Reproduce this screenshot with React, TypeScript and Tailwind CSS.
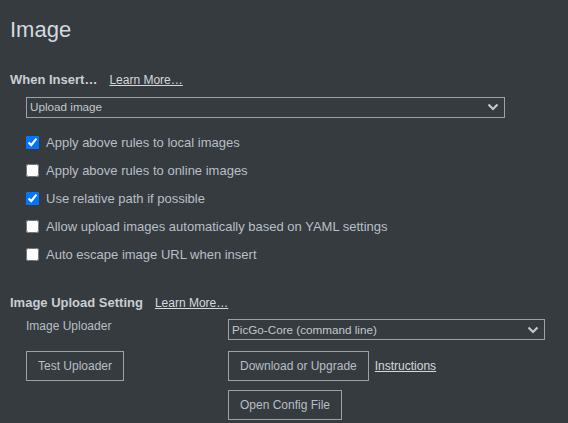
import React from "react";

const font = { fontFamily: '"Liberation Sans", Arial, sans-serif' };

const insertRules = [
  { label: "Apply above rules to local images", checked: true },
  { label: "Apply above rules to online images", checked: false },
  { label: "Use relative path if possible", checked: true },
  { label: "Allow upload images automatically based on YAML settings", checked: false },
  { label: "Auto escape image URL when insert", checked: false },
];

function Chevron() {
  return (
    <svg width="12" height="8" viewBox="0 0 12 8" className="shrink-0">
      <path d="M1.5 1.5 L6 6 L10.5 1.5" fill="none" stroke="#c3c8cd" strokeWidth="2.2" />
    </svg>
  );
}

function FakeSelect({ value, className }: { value: string; className: string }) {
  return (
    <div
      className={`flex h-[21px] items-center justify-between border border-[#9da2a7] pl-[3px] pr-[5px] text-[11.7px] text-[#c3c8cd] ${className}`}
    >
      <span>{value}</span>
      <Chevron />
    </div>
  );
}

function Button({ children }: { children: React.ReactNode }) {
  return (
    <button className="h-[30px] border border-[#9da2a7] px-[11px] text-[12px] text-[#b8bfc6]">
      {children}
    </button>
  );
}

export default function App() {
  return (
    <div className="min-h-[423px] bg-[#363b40] text-[#b8bfc6]" style={font}>
      <div className="px-[10px] pt-[16px]">
        <h1 className="text-[22px] leading-[28px] font-normal text-[#d5d9dd]">Image</h1>

        <div className="mt-[26px] flex items-baseline gap-[12px]">
          <span className="text-[13px] font-bold text-[#c9ced3]">When Insert…</span>
          <a className="text-[12px] text-[#d5d9dd] underline">Learn More…</a>
        </div>

        <div className="mt-[7px] pl-[16px]">
          <FakeSelect value="Upload image" className="w-[479px]" />
        </div>

        <div className="mt-[17px] flex flex-col gap-[12px] pl-[16px]">
          {insertRules.map((rule) => (
            <label key={rule.label} className="flex h-[16px] items-center gap-[7px] text-[13px]">
              <input
                type="checkbox"
                defaultChecked={rule.checked}
                className="m-0 h-[13px] w-[13px] accent-[#0075ff]"
              />
              <span>{rule.label}</span>
            </label>
          ))}
        </div>

        <div className="mt-[30px] flex items-baseline gap-[12px]">
          <span className="text-[13px] font-bold text-[#c9ced3]">Image Upload Setting</span>
          <a className="text-[12px] text-[#d5d9dd] underline">Learn More…</a>
        </div>

        <div className="mt-[7px] grid grid-cols-[202px_317px] gap-y-[10px] pl-[16px] text-[12px]">
          <div className="text-[12px] leading-[15px]">Image Uploader</div>
          <FakeSelect value="PicGo-Core (command line)" className="w-[317px]" />

          <div className="mt-[1px]">
            <Button>Test Uploader</Button>
          </div>
          <div className="mt-[1px] flex items-center gap-[6px]">
            <Button>Download or Upgrade</Button>
            <a className="text-[12px] text-[#d5d9dd] underline">Instructions</a>
          </div>

          <div />
          <div className="-mt-[1px]">
            <Button>Open Config File</Button>
          </div>
        </div>
      </div>
    </div>
  );
}
